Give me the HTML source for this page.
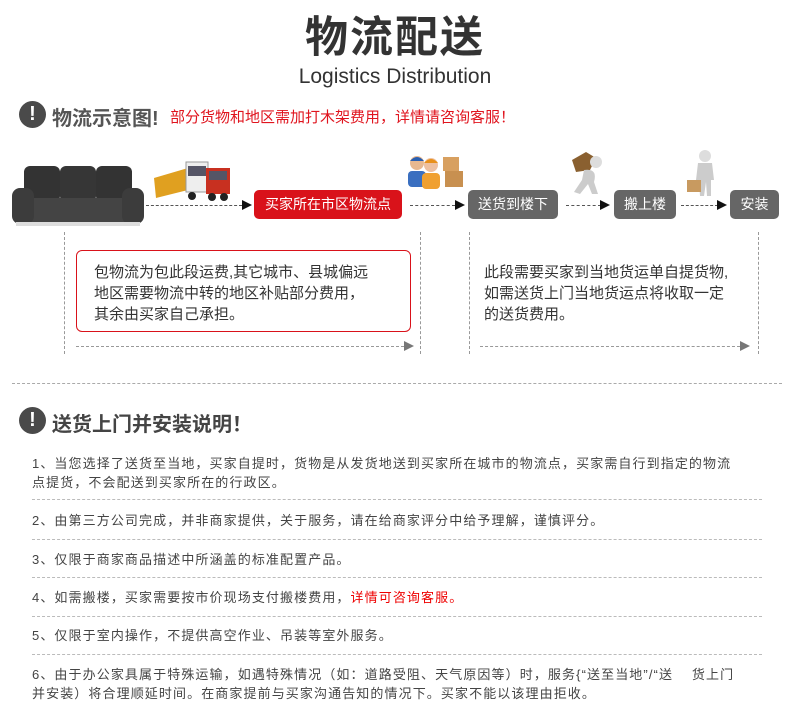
<!DOCTYPE html>
<html><head><meta charset="utf-8"><style>
*{margin:0;padding:0;box-sizing:border-box}
body{width:790px;height:715px;background:#fff;position:relative;overflow:hidden;font-family:"Liberation Sans","Noto Sans CJK SC",sans-serif;color:#333}
.a{position:absolute;white-space:nowrap}
.ic{position:absolute;width:27px;height:27px;border-radius:50%;background:#4a4a4a;color:#fff;font-weight:bold;font-size:20px;text-align:center;line-height:27px}
.btn{position:absolute;height:29px;line-height:29px;color:#fff;font-size:14px;text-align:center;border-radius:5px;background:#666}
.dh{position:absolute;border-top:1px dashed #555;height:0}
.dv{position:absolute;border-left:1px dashed #999;width:0}
.ar{position:absolute;width:0;height:0;border-top:5px solid transparent;border-bottom:5px solid transparent;border-left:10px solid #111}
.li{position:absolute;left:32px;font-size:13px;color:#444;line-height:19px;letter-spacing:1.1px;white-space:nowrap}
.sep{position:absolute;left:32px;width:730px;border-top:1px dashed #bbb}
</style></head><body>
<div class="a" style="left:0;width:790px;text-align:center;top:3px;font-size:43px;font-weight:bold;color:#333;letter-spacing:2px">物流配送</div>
<div class="a" style="left:0;width:790px;text-align:center;top:65px;font-size:21px;color:#333">Logistics Distribution</div>

<div class="ic" style="left:19px;top:101px">!</div>
<div class="a" style="left:52px;top:102px;font-size:20px;font-weight:bold;color:#555">物流示意图!</div>
<div class="a" style="left:170px;top:106px;font-size:15px;color:#e0141e">部分货物和地区需加打木架费用，详情请咨询客服！</div>

<svg class="a" style="left:10px;top:158px" width="134" height="74" viewBox="0 0 134 74">
<rect x="14" y="8" width="36" height="36" rx="6" fill="#333"/>
<rect x="50" y="8" width="36" height="36" rx="6" fill="#363636"/>
<rect x="86" y="8" width="36" height="36" rx="6" fill="#333"/>
<rect x="12" y="40" width="112" height="24" rx="3" fill="#444"/>
<rect x="2" y="30" width="22" height="36" rx="8" fill="#3c3c3c"/>
<rect x="112" y="30" width="22" height="36" rx="8" fill="#3c3c3c"/>
<rect x="6" y="64" width="124" height="4" fill="#ddd"/>
</svg>
<svg class="a" style="left:152px;top:158px" width="82" height="44" viewBox="0 0 82 44">
<polygon points="2,20 36,10 36,32 4,40" fill="#e0a020"/>
<rect x="34" y="4" width="22" height="30" fill="#eee" stroke="#999"/>
<rect x="54" y="10" width="24" height="26" fill="#c83020"/>
<rect x="36" y="8" width="18" height="10" fill="#556"/>
<rect x="57" y="13" width="18" height="9" fill="#556"/>
<circle cx="40" cy="38" r="4" fill="#222"/><circle cx="60" cy="39" r="4" fill="#222"/><circle cx="72" cy="39" r="4" fill="#222"/>
</svg>
<svg class="a" style="left:405px;top:153px" width="60" height="36" viewBox="0 0 60 36">
<circle cx="12" cy="10" r="7" fill="#e8b890"/><path d="M5 8 Q12 0 19 8Z" fill="#2a5fb0"/>
<rect x="3" y="18" width="18" height="16" rx="4" fill="#3a6fc0"/>
<circle cx="26" cy="12" r="7" fill="#eec0a0"/><path d="M19 10 Q26 2 33 10Z" fill="#e8901a"/>
<rect x="17" y="20" width="18" height="16" rx="4" fill="#f0a030"/>
<rect x="38" y="4" width="16" height="14" fill="#d8a060"/><rect x="40" y="18" width="18" height="16" fill="#c89050"/>
</svg>
<svg class="a" style="left:570px;top:150px" width="36" height="46" viewBox="0 0 36 46">
<path d="M2 10 L16 2 L26 8 L20 20 L6 22Z" fill="#8a6030"/>
<circle cx="26" cy="12" r="6" fill="#ddd"/>
<path d="M14 20 Q28 18 24 32 L28 44 L22 44 L18 34 L10 44 L4 42 L12 30Z" fill="#ccc"/>
</svg>
<svg class="a" style="left:685px;top:150px" width="36" height="46" viewBox="0 0 36 46">
<circle cx="20" cy="6" r="6" fill="#ddd"/>
<path d="M13 13 L27 13 L29 30 L26 30 L26 46 L22 46 L21 32 L19 46 L15 46 L14 30 L11 30Z" fill="#ccc"/>
<rect x="2" y="30" width="14" height="12" fill="#c89a60"/>
</svg>

<div class="dh" style="left:146px;top:205px;width:96px"></div><div class="ar" style="left:242px;top:200px"></div>
<div class="btn" style="left:254px;top:190px;width:148px;background:#d9121a">买家所在市区物流点</div>
<div class="dh" style="left:410px;top:205px;width:45px"></div><div class="ar" style="left:455px;top:200px"></div>
<div class="btn" style="left:468px;top:190px;width:90px">送货到楼下</div>
<div class="dh" style="left:566px;top:205px;width:35px"></div><div class="ar" style="left:600px;top:200px"></div>
<div class="btn" style="left:614px;top:190px;width:62px">搬上楼</div>
<div class="dh" style="left:681px;top:205px;width:37px"></div><div class="ar" style="left:717px;top:200px"></div>
<div class="btn" style="left:730px;top:190px;width:49px">安装</div>

<div class="dv" style="left:64px;top:232px;height:122px"></div>
<div class="dv" style="left:420px;top:232px;height:122px"></div>
<div class="dv" style="left:469px;top:232px;height:122px"></div>
<div class="dv" style="left:758px;top:232px;height:122px"></div>

<div class="a" style="left:76px;top:250px;width:335px;height:82px;border:1px solid #d9121a;border-radius:6px"></div>
<div class="a" style="left:94px;top:262px;font-size:15px;line-height:21px;color:#333">包物流为包此段运费,其它城市、县城偏远<br>地区需要物流中转的地区补贴部分费用，<br>其余由买家自己承担。</div>
<div class="a" style="left:484px;top:262px;font-size:15px;line-height:21px;color:#333">此段需要买家到当地货运单自提货物,<br>如需送货上门当地货运点将收取一定<br>的送货费用。</div>

<div class="dh" style="left:76px;top:346px;width:328px;border-color:#999"></div><div class="ar" style="left:404px;top:341px;border-left-color:#777"></div>
<div class="dh" style="left:480px;top:346px;width:260px;border-color:#999"></div><div class="ar" style="left:740px;top:341px;border-left-color:#777"></div>

<div class="dh" style="left:12px;top:383px;width:770px;border-color:#aaa"></div>

<div class="ic" style="left:19px;top:407px">!</div>
<div class="a" style="left:52px;top:408px;font-size:20px;font-weight:bold;color:#444">送货上门并安装说明！</div>

<div class="li" style="top:454px">1、当您选择了送货至当地，买家自提时，货物是从发货地送到买家所在城市的物流点，买家需自行到指定的物流<br>点提货，不会配送到买家所在的行政区。</div>
<div class="sep" style="top:499px"></div>
<div class="li" style="top:511px">2、由第三方公司完成，并非商家提供，关于服务，请在给商家评分中给予理解，谨慎评分。</div>
<div class="sep" style="top:539px"></div>
<div class="li" style="top:550px">3、仅限于商家商品描述中所涵盖的标准配置产品。</div>
<div class="sep" style="top:577px"></div>
<div class="li" style="top:588px">4、如需搬楼，买家需要按市价现场支付搬楼费用，<span style="color:#e00">详情可咨询客服。</span></div>
<div class="sep" style="top:616px"></div>
<div class="li" style="top:626px">5、仅限于室内操作，不提供高空作业、吊装等室外服务。</div>
<div class="sep" style="top:654px"></div>
<div class="li" style="top:665px">6、由于办公家具属于特殊运输，如遇特殊情况（如：道路受阻、天气原因等）时，服务{“送至当地”/“送　 货上门<br>并安装）将合理顺延时间。在商家提前与买家沟通告知的情况下。买家不能以该理由拒收。</div>
</body></html>
